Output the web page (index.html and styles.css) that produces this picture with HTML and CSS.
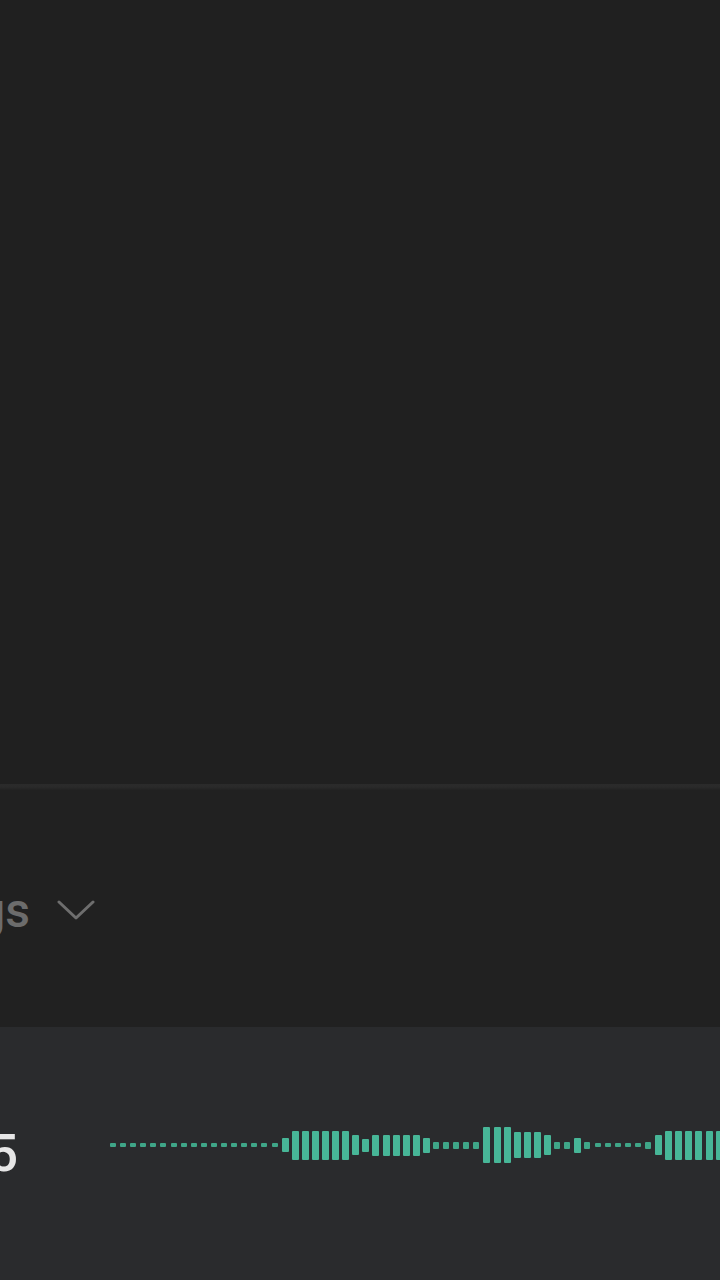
FILE: index.html
```html
<!DOCTYPE html>
<html lang="en">
<head>
<meta charset="utf-8">
<title>Recorder</title>
<link rel="stylesheet" href="styles.css">
</head>
<body>
<div class="app">
  <main class="canvas"></main>
  <div class="divider"></div>
  <section class="toolbar">
    <div class="picker">
      <div class="label"><span>Recordings</span></div>
      <svg class="chev" width="38" height="20" viewBox="0 0 38 20"><polyline points="2,2 19,18 36,2" fill="none" stroke="#6e6e6e" stroke-width="3" stroke-linecap="round" stroke-linejoin="round"/></svg>
    </div>
  </section>
  <section class="player">
    <div class="time"><span>0:05</span></div>
    <div class="wave">
      <i class="b d" style="height:4px"></i><i class="b d" style="height:4px"></i><i class="b d" style="height:4px"></i><i class="b d" style="height:4px"></i><i class="b d" style="height:4px"></i><i class="b d" style="height:4px"></i><i class="b d" style="height:4px"></i><i class="b d" style="height:4px"></i><i class="b d" style="height:4px"></i><i class="b d" style="height:4px"></i><i class="b d" style="height:4px"></i><i class="b d" style="height:4px"></i><i class="b d" style="height:4px"></i><i class="b d" style="height:4px"></i><i class="b d" style="height:4px"></i><i class="b d" style="height:4px"></i><i class="b d" style="height:4px"></i>
      <i class="b" style="height:14px"></i>
      <i class="b" style="height:29px"></i><i class="b" style="height:29px"></i><i class="b" style="height:29px"></i><i class="b" style="height:29px"></i><i class="b" style="height:29px"></i><i class="b" style="height:29px"></i>
      <i class="b" style="height:20px"></i>
      <i class="b" style="height:13px"></i>
      <i class="b" style="height:21px"></i><i class="b" style="height:21px"></i><i class="b" style="height:21px"></i><i class="b" style="height:21px"></i><i class="b" style="height:21px"></i>
      <i class="b" style="height:15px"></i>
      <i class="b d" style="height:7px"></i><i class="b d" style="height:7px"></i><i class="b d" style="height:7px"></i><i class="b d" style="height:7px"></i><i class="b d" style="height:7px"></i>
      <i class="b" style="height:36px"></i><i class="b" style="height:36px"></i><i class="b" style="height:36px"></i>
      <i class="b" style="height:26px"></i><i class="b" style="height:26px"></i><i class="b" style="height:26px"></i>
      <i class="b" style="height:20px"></i>
      <i class="b d" style="height:7px"></i><i class="b d" style="height:7px"></i>
      <i class="b" style="height:15px"></i>
      <i class="b d" style="height:7px"></i>
      <i class="b d" style="height:4px"></i><i class="b d" style="height:4px"></i><i class="b d" style="height:4px"></i><i class="b d" style="height:4px"></i><i class="b d" style="height:4px"></i>
      <i class="b d" style="height:7px"></i>
      <i class="b" style="height:20px"></i>
      <i class="b" style="height:29px"></i><i class="b" style="height:29px"></i><i class="b" style="height:29px"></i><i class="b" style="height:29px"></i><i class="b" style="height:29px"></i><i class="b" style="height:29px"></i><i class="b" style="height:29px"></i>
    </div>
  </section>
</div>
</body>
</html>
```
FILE: styles.css
```css
html, body {
  margin: 0;
  padding: 0;
  background: #202020;
  overflow: hidden;
}
body {
  width: 720px;
  height: 1280px;
  font-family: Roboto, "Noto Sans", sans-serif;
}
.app {
  display: flex;
  flex-direction: column;
  width: 720px;
  height: 1280px;
  overflow: hidden;
}
.canvas {
  height: 784px;
  background: #202020;
  flex: none;
}
.divider {
  height: 6px;
  flex: none;
  background: linear-gradient(#2b2b2b 0, #2a2a2a 50%, #222222 100%);
}
.toolbar {
  height: 237px;
  flex: none;
  background: #212121;
  padding-top: 97px;
  box-sizing: border-box;
}
.picker {
  display: flex;
  align-items: center;
  height: 48px;
}
.label {
  width: 30px;
  display: flex;
  justify-content: flex-end;
  white-space: nowrap;
  font-size: 48px;
  line-height: 48px;
  font-weight: 500;
  color: #6c6c6c;
  flex: none;
}
.chev {
  margin-left: 27px;
  margin-top: -2px;
  flex: none;
}
.player {
  flex: 1;
  background: #2a2b2d;
  display: flex;
  align-items: flex-start;
  padding-top: 98px;
  box-sizing: border-box;
}
.time {
  width: 18px;
  flex: none;
  display: flex;
  justify-content: flex-end;
  white-space: nowrap;
  font-size: 52px;
  line-height: 52px;
  font-weight: 500;
  color: #e6e6e6;
  margin-top: 3px;
}
.wave {
  margin-left: 92px;
  height: 40px;
  display: flex;
  align-items: center;
  flex: none;
}
.b {
  display: block;
  flex: 0 0 7px;
  width: 7px;
  margin-right: 3.1px;
  background: #47b697;
  border-radius: 1px;
}
.b.d {
  flex-basis: 6px;
  width: 6px;
  margin-right: 4.1px;
  background: #3fa688;
}
```
